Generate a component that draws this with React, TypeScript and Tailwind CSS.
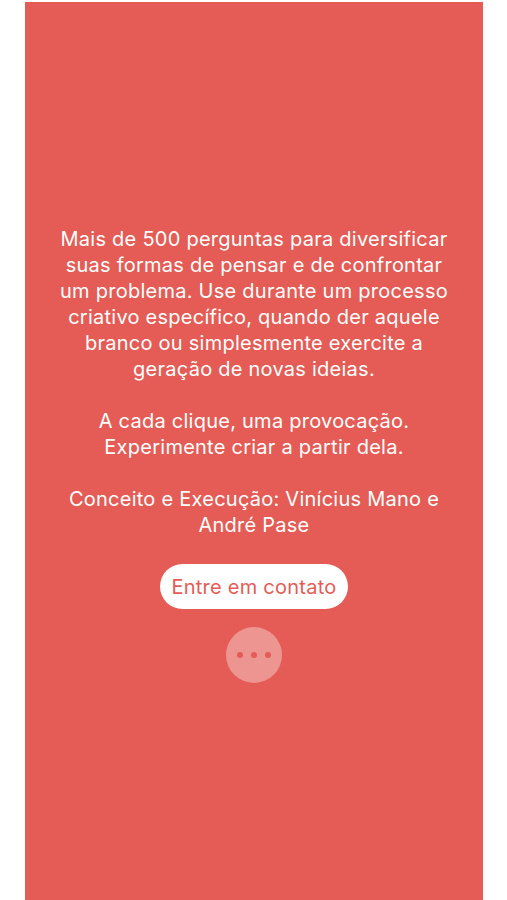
export default function App() {
  return (
    <div className="min-h-screen bg-white pt-[2px]">
      <main
        className="ml-[25px] w-[458px] h-[898px] bg-[#e45c55] flex flex-col items-center pt-[224px] text-white text-center"
        style={{ fontFamily: 'Inter, "Noto Sans", sans-serif' }}
      >
        <div className="text-[20px] leading-[26px] tracking-[0.25px]">
          <p>
            Mais de 500 perguntas para diversificar
            <br />
            suas formas de pensar e de confrontar
            <br />
            um problema. Use durante um processo
            <br />
            criativo específico, quando der aquele
            <br />
            branco ou simplesmente exercite a
            <br />
            geração de novas ideias.
          </p>
          <p className="mt-[26px]">
            A cada clique, uma provocação.
            <br />
            Experimente criar a partir dela.
          </p>
          <p className="mt-[26px]">
            Conceito e Execução: Vinícius Mano e
            <br />
            André Pase
          </p>
        </div>

        <button className="mt-[26px] h-[45px] w-[188px] rounded-full bg-white text-[#e45c55] text-[20px] tracking-[0.25px]">
          Entre em contato
        </button>

        <button
          aria-label="Mais"
          className="mt-[18px] w-[56px] h-[56px] rounded-full bg-white/35 flex items-center justify-center gap-[8px]"
        >
          <span className="w-[6px] h-[6px] rounded-full bg-[#e45c55]" />
          <span className="w-[6px] h-[6px] rounded-full bg-[#e45c55]" />
          <span className="w-[6px] h-[6px] rounded-full bg-[#e45c55]" />
        </button>
      </main>
    </div>
  )
}
